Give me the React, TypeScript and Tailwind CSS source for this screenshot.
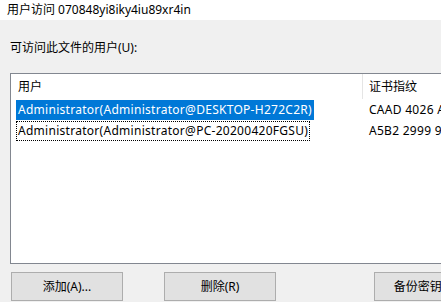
const font = "font-['Noto_Sans','Noto_Sans_CJK_SC',sans-serif]"

type Row = { user: string; thumb: string; selected?: boolean; focused?: boolean }

const rows: Row[] = [
  { user: "Administrator(Administrator@DESKTOP-H272C2R)", thumb: "CAAD 4026 A", selected: true },
  { user: "Administrator(Administrator@PC-20200420FGSU)", thumb: "A5B2 2999 9", focused: true },
]

function Button({ label, className }: { label: string; className?: string }) {
  return (
    <div
      className={`flex h-[29px] shrink-0 items-center justify-center whitespace-nowrap border border-[#adadad] bg-[#e1e1e1] text-[12px] text-black ${className ?? ""}`}>
      {label}
    </div>
  )
}

export default function App() {
  return (
    <div className={`flex h-[302px] w-[441px] flex-col overflow-hidden bg-[#f0f0f0] text-[12px] leading-none text-black ${font}`}>
      {/* title strip */}
      <div className="flex h-[20px] shrink-0 items-center bg-white pl-[7px]">用户访问 070848yi8iky4iu89xr4in</div>

      <div className="mt-[22px] h-[14px] shrink-0 pl-[10px]">可访问此文件的用户(U):</div>

      {/* list */}
      <div className="ml-[10px] mt-[17px] h-[191px] w-[450px] shrink-0 border border-[#828790] bg-white">
        <div className="flex h-[25px] items-center">
          <div className="w-[351px] pl-[7px]">用户</div>
          <div className="h-full w-px bg-[#e5e5e5]" />
          <div className="pl-[6px]">证书指纹</div>
        </div>
        {rows.map((r) => (
          <div key={r.user} className="flex h-[21px] items-center">
            <div className="w-[352px] pl-[5px]">
              <span
                className={`inline-flex h-[20px] items-center px-[1px] tracking-[0.28px] ${
                  r.selected ? "bg-[#0078d7] text-white" : ""
                } ${r.focused ? "border border-dotted border-black" : "border border-transparent"}`}>
                {r.user}
              </span>
            </div>
            <div className="pl-[6px] whitespace-nowrap tracking-[0.28px]">{r.thumb}</div>
          </div>
        ))}
      </div>

      {/* buttons */}
      <div className="mt-[8px] flex pl-[11px]">
        <Button label="添加(A)..." className="w-[112px]" />
        <Button label="删除(R)" className="ml-[41px] w-[112px]" />
        <Button label="备份密钥(K)..." className="ml-[98px] w-[112px]" />
      </div>
    </div>
  )
}
